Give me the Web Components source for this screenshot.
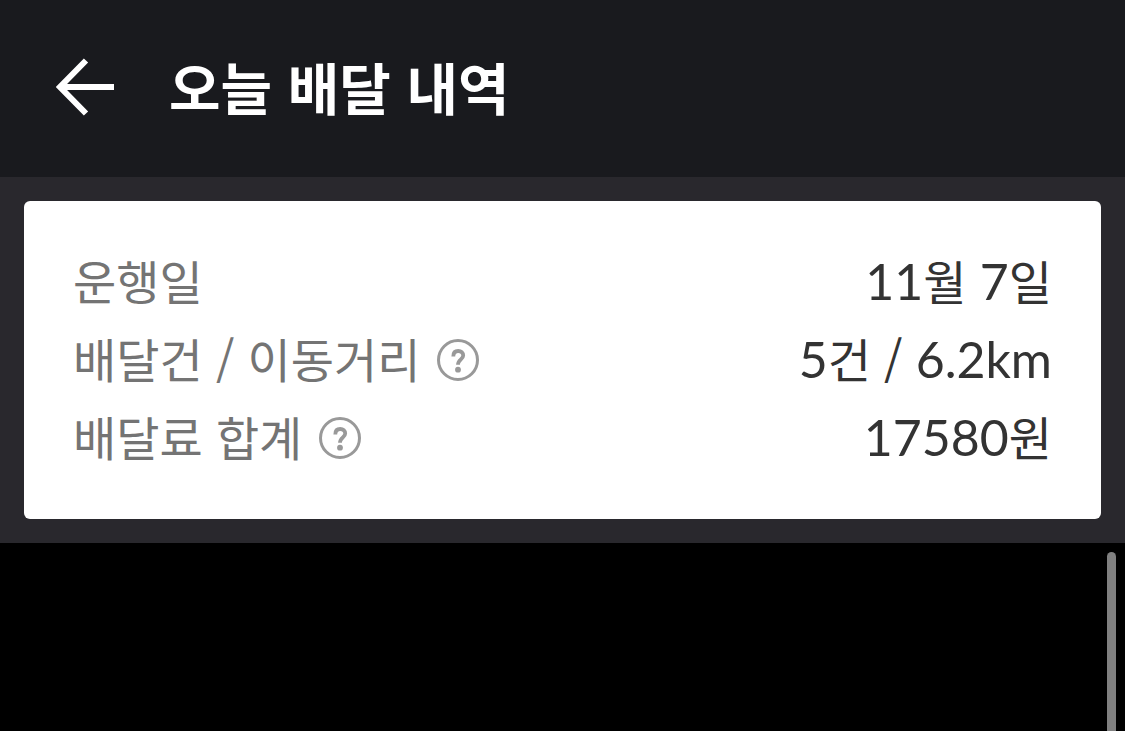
<!DOCTYPE html>
<html lang="ko">
<head>
<meta charset="utf-8">
<meta name="viewport" content="width=device-width, initial-scale=1">
<title>오늘 배달 내역</title>
<style>
  html, body { margin: 0; height: 100%; background: #000; }
  body { font-family: "Noto Sans CJK KR", sans-serif; }
</style>
</head>
<body>
<delivery-page>
  <page-header slot="header">오늘 배달 내역</page-header>
  <summary-card slot="summary">
    <summary-row>운행일<span slot="value"><latin-text>11</latin-text>월 <latin-text>7</latin-text>일</span></summary-row>
    <summary-row help="배달건 / 이동거리 도움말">배달건 / 이동거리<span slot="value"><latin-text>5</latin-text>건 / <latin-text>6.2km</latin-text></span></summary-row>
    <summary-row help="배달료 합계 도움말">배달료 합계<span slot="value"><latin-text>17580</latin-text>원</span></summary-row>
  </summary-card>
  <history-list></history-list>
</delivery-page>
<script>
  class BaseElement extends HTMLElement {
    constructor() {
      super();
      this.attachShadow({ mode: "open" }).innerHTML = this.constructor.markup;
    }
  }

  customElements.define("delivery-page", class extends BaseElement {
    static markup = `
      <style>
        :host { display: flex; flex-direction: column; height: 100vh; overflow: hidden; background: #000; }
        .summary { flex: none; padding: 24px; background: #29282d; }
        main { flex: 1; display: flex; min-height: 0; }
      </style>
      <slot name="header"></slot>
      <section class="summary"><slot name="summary"></slot></section>
      <main><slot></slot></main>`;
  });

  customElements.define("page-header", class extends BaseElement {
    static markup = `
      <style>
        :host { display: block; flex: none; background: #191a1e; color: #fff; }
        header { display: flex; align-items: flex-start; gap: 55px; padding: 44px 56px 47px; }
        button { display: flex; align-items: center; height: 86px; padding: 0; border: 0; background: none; color: inherit; cursor: pointer; }
        svg { display: block; }
        h1 { margin: 0; font-size: 56px; line-height: 84px; font-weight: 700; }
      </style>
      <header>
        <button type="button" aria-label="뒤로">
          <svg width="58" height="58" viewBox="0 0 58 58" fill="none" stroke="currentColor" stroke-width="6" aria-hidden="true">
            <path d="M58 29H5M30 2.500L4 29L30 55.500"/>
          </svg>
        </button>
        <h1><slot></slot></h1>
      </header>`;
  });

  customElements.define("summary-card", class extends BaseElement {
    static markup = `
      <style>
        :host { display: block; padding: 42px 49px; border-radius: 6px; background: #fff; }
      </style>
      <slot></slot>`;
  });

  // Numbers and units use a Latin face, slightly larger than the Hangul around them.
  customElements.define("latin-text", class extends BaseElement {
    static markup = `
      <style>
        :host { display: inline; font-family: Lato, sans-serif; font-size: 50px; line-height: 1; }
      </style>
      <slot></slot>`;
  });

  customElements.define("summary-row", class extends BaseElement {
    static markup = `
      <style>
        :host { display: flex; justify-content: space-between; align-items: center; height: 78px; font-size: 47px; line-height: 74px; white-space: nowrap; }
        .label { display: flex; align-items: center; gap: 17px; color: #747474; }
        .text { padding-bottom: 4px; }
        .value { color: #333; }
        button { display: flex; padding: 0; border: 0; background: none; color: #999; cursor: pointer; }
        button[hidden] { display: none; }
      </style>
      <div class="label">
        <span class="text"><slot></slot></span>
        <button type="button" hidden>
          <svg width="42" height="42" viewBox="0 0 42 42" fill="none" stroke="currentColor" aria-hidden="true">
            <circle cx="21" cy="21" r="19.500" stroke-width="3"/>
            <path d="M16.300 17.500C16.300 14 18.200 12 21.200 12C24.200 12 26.200 13.800 26.200 16.600C26.200 20.400 21 20.600 21 25.800" stroke-width="3.800"/>
            <circle cx="21" cy="30.700" r="2.900" fill="currentColor" stroke="none"/>
          </svg>
        </button>
      </div>
      <div class="value text"><slot name="value"></slot></div>`;
    connectedCallback() {
      const help = this.getAttribute("help");
      if (!help) return;
      const button = this.shadowRoot.querySelector("button");
      button.hidden = false;
      button.setAttribute("aria-label", help);
    }
  });

  customElements.define("history-list", class extends BaseElement {
    static markup = `
      <style>
        :host { flex: 1; display: flex; justify-content: flex-end; padding: 9px 9px 0 0; }
        .thumb { width: 9px; height: 100vh; border-radius: 5px; background: #808080; }
      </style>
      <div class="thumb" aria-hidden="true"></div>`;
  });
</script>
</body>
</html>
